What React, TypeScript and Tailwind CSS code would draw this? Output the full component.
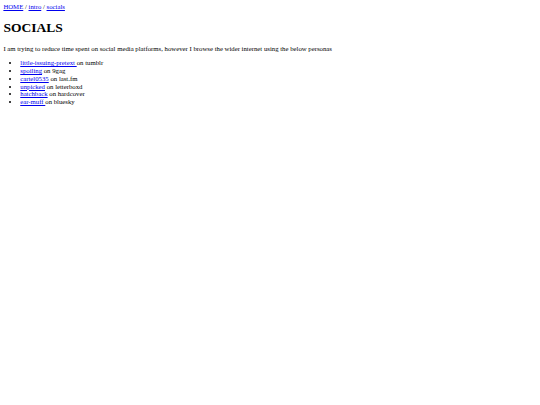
export default function App() {
  const items: [string, string][] = [
    ["little-issuing-pretext ", "on tumblr"],
    ["spoiling", " on 9gag"],
    ["cartel0535", " on last.fm"],
    ["unpicked", " on letterboxd"],
    ["hatchback", " on hardcover"],
    ["ear-muff ", "on bluesky"],
  ];
  return (
    <div className="min-h-[405px] bg-white p-[3.375px] text-black text-[6.75px] leading-[7.76px] font-['Liberation_Serif',serif]">
      <nav>
        <a href="#" className="text-[#0000ee] underline">HOME</a> /{" "}
        <a href="#" className="text-[#0000ee] underline">intro</a> /{" "}
        <a href="#" className="text-[#0000ee] underline">socials</a>
      </nav>
      <h1 className="text-[13.5px] font-bold leading-[15.5px] my-[9.05px]">SOCIALS</h1>
      <p className="my-[6.75px]">
        I am trying to reduce time spent on social media platforms, however I browse the wider internet using the below personas
      </p>
      <ul className="list-disc pl-[16.875px] my-[6.75px]">
        {items.map(([name, rest]) => (
          <li key={name}>
            <a href="#" className="text-[#0000ee] underline">{name}</a>
            {rest}
          </li>
        ))}
      </ul>
    </div>
  );
}
